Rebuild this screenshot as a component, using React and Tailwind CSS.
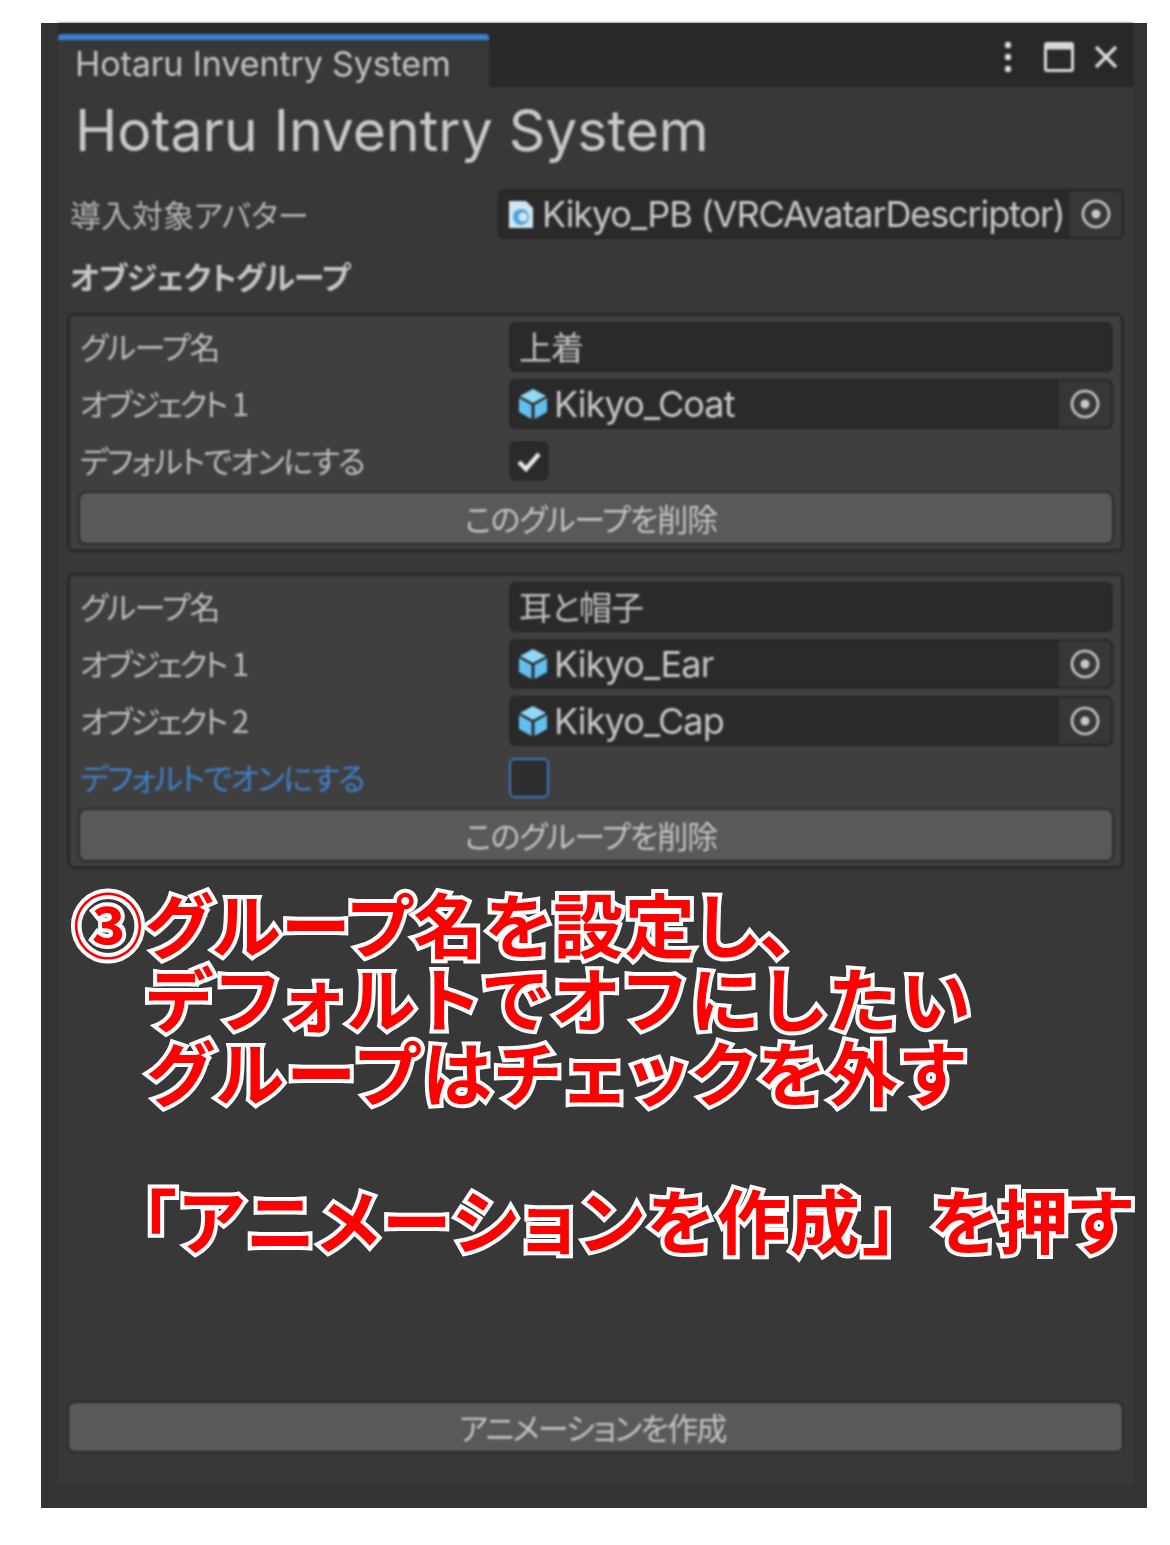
const latin = "font-['Inter','Noto_Sans_CJK_JP',sans-serif]";
const jp = "font-['Noto_Sans_CJK_JP',sans-serif] [font-feature-settings:'palt']";

function Target() {
  return (
    <svg width="32" height="32" viewBox="0 0 32 32" fill="none">
      <circle cx="16" cy="16" r="13" stroke="#c8c8c8" strokeWidth="2.6" />
      <circle cx="16" cy="16" r="4.5" fill="#c8c8c8" />
    </svg>
  );
}

function Cube() {
  return (
    <svg width="30" height="32" viewBox="0 0 30 32" className="shrink-0">
      <path d="M15 1 L28 8 L15 15 L2 8 Z" fill="#8fd8f8" />
      <path d="M1 10 L13.5 17 L13.5 31 L1 24 Z" fill="#62c0ee" />
      <path d="M29 10 L16.5 17 L16.5 31 L29 24 Z" fill="#62c0ee" />
    </svg>
  );
}

function Doc() {
  return (
    <svg width="28" height="32" viewBox="0 0 28 32" className="shrink-0">
      <path d="M2 3 H19 L26 10 V30 H2 Z" fill="#cfe6f5" />
      <circle cx="14" cy="19" r="8" fill="#4fa3dc" />
      <circle cx="16" cy="19" r="4.5" fill="#cfe6f5" />
    </svg>
  );
}

function ObjectField({ name, wide, icon }) {
  return (
    <div className={`flex items-center h-[50px] rounded-[7px] bg-[#2a2a2a] border-2 border-[#262626] overflow-hidden ${wide ? "" : "flex-1"}`}>
      <div className={`flex items-center flex-1 pl-[7px] min-w-0 ${wide ? "gap-[7px]" : "gap-[6px]"}`}>
        {icon === "doc" ? <Doc /> : <Cube />}
        <span className={`${latin} text-[36px] text-[#c8c8c8] whitespace-nowrap ${wide ? "tracking-[-1.1px]" : "tracking-[-0.9px]"}`}>{name}</span>
      </div>
      <div className="w-[52px] h-full bg-[#373737] flex items-center justify-center shrink-0">
        <Target />
      </div>
    </div>
  );
}

function Label({ children, blue, spacing }) {
  return (
    <div className={`${jp} w-[429px] shrink-0 text-[31px] leading-none -translate-y-[2px] ${spacing} ${blue ? "text-[#3f7fca]" : "text-[#bdbdbd]"}`}>
      {children}
    </div>
  );
}

function Row({ label, blue, spacing = "tracking-[-1.2px]", children }) {
  return (
    <div className="flex items-center h-[50px]">
      <Label blue={blue} spacing={spacing}>{label}</Label>
      {children}
    </div>
  );
}

const objSpacing = "tracking-[-3px] [word-spacing:3px]";
const longSpacing = "tracking-[-1.7px]";

function TextField({ value }) {
  return (
    <div className={`${jp} flex-1 h-[50px] rounded-[7px] bg-[#2a2a2a] border-2 border-[#262626] flex items-center pl-[8px] text-[33px] tracking-[-1px] text-[#c0c0c0]`}>
      {value}
    </div>
  );
}

function Check({ checked }) {
  return (
    <div className={`w-[40px] h-[40px] rounded-[6px] flex items-center justify-center border-2 ${checked ? "bg-[#2a2a2a] border-[#2c2c2c]" : "bg-[#2e2e2e] border-[#3a79bb]"}`}>
      {checked && (
        <svg width="28" height="24" viewBox="0 0 28 24" fill="none">
          <path d="M4 13 L11 20 L24 5" stroke="#e8e8e8" strokeWidth="4.5" />
        </svg>
      )}
    </div>
  );
}

function Button({ children, className = "" }) {
  return (
    <div className={`${jp} rounded-[6px] bg-[#595959] shadow-[0_0_0_2px_#2a2a2a] flex items-center justify-center text-[31px] text-[#c4c4c4] ${className}`}>
      {children}
    </div>
  );
}

function Group({ children }) {
  return (
    <div className="mx-[9px] rounded-[7px] bg-[#3f3f3f] border-[3px] border-[#2a2a2a] pt-[6px] pb-[6px] pl-[10px] pr-[8px] flex flex-col gap-[7px]">
      {children}
    </div>
  );
}

function Note({ children, className = "" }) {
  return (
    <div className={`${jp} h-[74px] leading-[74px] text-[70px] font-bold text-[#ff0000] whitespace-nowrap [-webkit-text-stroke:8px_white] [paint-order:stroke_fill] ${className}`}>
      {children}
    </div>
  );
}

export default function App() {
  return (
    <div className="w-[1170px] h-[1545px] bg-white pt-[23px] pl-[41px]">
      <div className="w-[1106px] h-[1485px] bg-[#333333] pl-[17px] pr-[14px] pb-[24px] flex flex-col">
        <div className="h-[64px] shrink-0 bg-[#282828] flex pt-[11px] pr-[14px] blur-[0.8px]">
          <div className="w-[431px] rounded-t-[4px] bg-[#383838] border-t-[6px] border-[#3a80d0] flex items-center pl-[17px]">
            <span className={`${latin} text-[34px] tracking-[-0.1px] text-[#c4c4c4] whitespace-nowrap`}>Hotaru Inventry System</span>
          </div>
          <div className="flex-1 flex items-start justify-end">
            <div className="flex items-center gap-[17px] pt-[7px]">
              <svg width="12" height="32" viewBox="0 0 12 32" className="mr-[13px]">
                <circle cx="6" cy="4" r="3.2" fill="#d8d8d8" />
                <circle cx="6" cy="16" r="3.2" fill="#d8d8d8" />
                <circle cx="6" cy="28" r="3.2" fill="#d8d8d8" />
              </svg>
              <svg width="30" height="30" viewBox="0 0 30 30" fill="none">
                <rect x="1.5" y="1.5" width="27" height="27" rx="1.5" stroke="#d8d8d8" strokeWidth="3" />
                <rect x="1.5" y="1.5" width="27" height="6" fill="#d8d8d8" />
              </svg>
              <svg width="26" height="26" viewBox="0 0 26 26" fill="none" className="ml-[2px]">
                <path d="M3 3 L23 23 M23 3 L3 23" stroke="#d8d8d8" strokeWidth="3.5" />
              </svg>
            </div>
          </div>
        </div>

        <div className="flex-1 bg-[#383838] flex flex-col min-h-0">
          <div className="blur-[0.8px]">
            <div className={`${latin} h-[88px] pl-[17px] flex items-center text-[57px] text-[#c8c8c8] whitespace-nowrap`}>
              Hotaru Inventry System
            </div>
            <div className="flex items-center h-[50px] mt-[14px] pl-[12px] pr-[9px]">
              <div className={`${jp} w-[428px] shrink-0 text-[31px] leading-none -translate-y-[1px] text-[#b4b4b4]`}>導入対象アバター</div>
              <div className="flex-1 min-w-0">
                <ObjectField name="Kikyo_PB (VRCAvatarDescriptor)" wide icon="doc" />
              </div>
            </div>
            <div className={`${jp} h-[74px] pl-[12px] flex items-center text-[31px] tracking-[-0.6px] font-bold text-[#c4c4c4]`}>オブジェクトグループ</div>
            <Group>
              <Row label="グループ名"><TextField value="上着" /></Row>
              <Row label="オブジェクト 1" spacing={objSpacing}><ObjectField name="Kikyo_Coat" /></Row>
              <Row label="デフォルトでオンにする" spacing={longSpacing}><Check checked /></Row>
              <Button className="h-[50px] mr-[1px] tracking-[-1px] pr-[10px]">このグループを削除</Button>
            </Group>
            <div className="h-[21px]" />
            <Group>
              <Row label="グループ名"><TextField value="耳と帽子" /></Row>
              <Row label="オブジェクト 1" spacing={objSpacing}><ObjectField name="Kikyo_Ear" /></Row>
              <Row label="オブジェクト 2" spacing={objSpacing}><ObjectField name="Kikyo_Cap" /></Row>
              <Row label="デフォルトでオンにする" blue spacing={longSpacing}><Check /></Row>
              <Button className="h-[50px] mr-[1px] tracking-[-1px] pr-[10px]">このグループを削除</Button>
            </Group>
          </div>

          <div className="pl-[15px] pt-[17px] flex-1">
            <Note className="tracking-[1.5px]">③グループ名を設定し、</Note>
            <Note className="pl-[73px] tracking-[5px]">デフォルトでオフにしたい</Note>
            <Note className="pl-[73px] tracking-[3.4px]">グループはチェックを外す</Note>
            <Note className="pl-[73px]">&nbsp;</Note>
            <Note className="pl-[68px] tracking-[3px]">「アニメーションを作成」<span className="ml-[30px] tracking-[0.5px]">を押す</span></Note>
          </div>

          <div className="blur-[0.8px] px-[11px] mb-[33px]">
            <Button className="h-[48px] tracking-[-1.7px] pr-[6px]">アニメーションを作成</Button>
          </div>
        </div>
      </div>
    </div>
  );
}
